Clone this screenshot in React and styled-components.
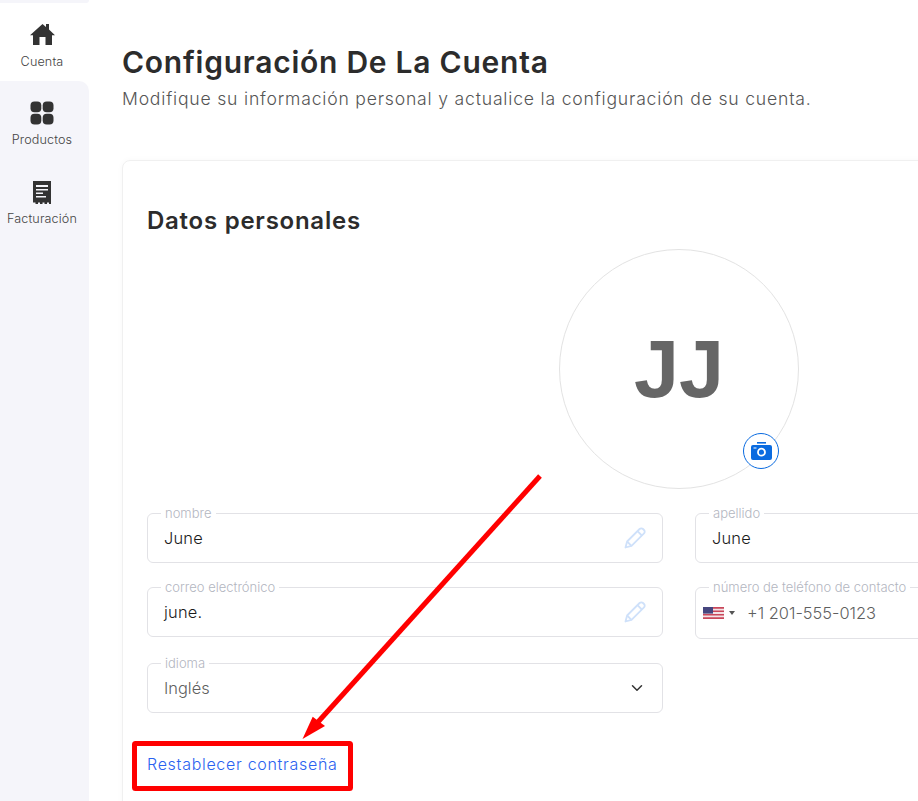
import styled, { createGlobalStyle } from 'styled-components'
import { ChevronDown } from 'lucide-react'

const GlobalStyle = createGlobalStyle`
  html, body {
    margin: 0;
    height: 801px;
    overflow: hidden;
    background: #fff;
    font-family: Inter, "Noto Sans", sans-serif;
    color: #2b2b2b;
  }
`

const Page = styled.div`
  position: relative;
  display: flex;
  width: 918px;
  height: 801px;
  overflow: hidden;
`

const Sidebar = styled.nav`
  flex: none;
  display: flex;
  flex-direction: column;
  width: 89px;
`

const TopCap = styled.div`
  height: 3px;
  background: #f5f5fa;
  border-radius: 0 0 10px 0;
`

const NavGroup = styled.div`
  flex: 1;
  background: #f5f5fa;
  border-radius: 0 10px 0 0;
`

const NavItem = styled.a`
  display: flex;
  flex-direction: column;
  align-items: center;
  width: 84px;
  height: ${(p) => (p.$active ? 78 : 79)}px;
  box-sizing: border-box;
  padding-top: ${(p) => (p.$active ? 18 : 19)}px;
  font-size: 12.6px;
  line-height: 16px;
  font-weight: 300;
  letter-spacing: 0.01em;
  color: #444;
`

const NavIcon = styled.span`
  display: flex;
  align-items: center;
  justify-content: center;
  height: 26px;
  margin-bottom: ${(p) => (p.$active ? 7 : 6)}px;
`

const Main = styled.main`
  flex: none;
  width: 1200px;
  padding: 42px 0 0 33px;
  box-sizing: border-box;
`

const Title = styled.h1`
  margin: 0;
  font-size: 30px;
  line-height: 40px;
  font-weight: 600;
  letter-spacing: 0.75px;
  color: #2c2c2c;
`

const Subtitle = styled.p`
  margin: 4px 0 0;
  font-size: 17.6px;
  line-height: 26px;
  font-weight: 300;
  letter-spacing: 0.8px;
  color: #555;
`

const Card = styled.section`
  margin-top: 48px;
  padding: 42px 24px 0;
  width: 1114px;
  height: 700px;
  box-sizing: border-box;
  border: 1px solid #f0f0f0;
  border-radius: 8px;
  box-shadow: 0 0 6px rgba(0, 0, 0, 0.03);
`

const CardTitle = styled.h2`
  margin: 0;
  font-size: 24px;
  line-height: 36px;
  font-weight: 600;
  letter-spacing: 0.75px;
  color: #2c2c2c;
`

const AvatarRow = styled.div`
  display: flex;
  justify-content: center;
  margin-top: 10px;
`

const Avatar = styled.div`
  position: relative;
  display: flex;
  align-items: center;
  justify-content: center;
  width: 240px;
  height: 240px;
  box-sizing: border-box;
  border: 1px solid #e3e3e3;
  border-radius: 50%;
  font-family: "Liberation Sans", Arial, sans-serif;
  font-size: 81px;
  font-weight: 700;
  color: #666;
`

const CameraBadge = styled.button`
  position: absolute;
  right: 19px;
  bottom: 19px;
  display: flex;
  align-items: center;
  justify-content: center;
  width: 36px;
  height: 36px;
  padding: 0;
  background: #fff;
  border: 1.5px solid #0a6be0;
  border-radius: 50%;
`

const FieldGrid = styled.div`
  display: grid;
  grid-template-columns: 516px 516px;
  column-gap: 32px;
  margin-top: 17px;
`

const Field = styled.fieldset`
  display: flex;
  align-items: center;
  justify-content: space-between;
  height: ${(p) => p.$height || 57}px;
  margin: 0 0 17px;
  padding: 0 16px 6px;
  box-sizing: border-box;
  border: 1px solid #e2e2e6;
  border-radius: 6px;
  min-width: 0;
`

const Legend = styled.legend`
  margin-left: -3px;
  padding: 0 4px;
  font-size: 13px;
  line-height: 14px;
  font-weight: 300;
  color: #b3b6bf;
`

const Value = styled.span`
  font-size: 16.4px;
  letter-spacing: ${(p) => (p.$muted ? 0 : 0.2)}px;
  color: ${(p) => (p.$muted ? '#5f5f5f' : '#1c1c1c')};
  font-weight: 300;
`

const FlagPicker = styled.span`
  display: inline-flex;
  align-items: center;
  gap: 5px;
  margin-right: 12px;
`

const Caret = styled.span`
  width: 0;
  height: 0;
  border-left: 3px solid transparent;
  border-right: 3px solid transparent;
  border-top: 4px solid #555;
`

const PhoneRow = styled.span`
  display: flex;
  align-items: center;
  margin-left: -9px;
`

const ResetLink = styled.a`
  display: inline-block;
  margin-top: 22px;
  font-size: 16px;
  line-height: 24px;
  font-weight: 300;
  letter-spacing: 0.7px;
  color: #2a62f0;
`

const Annotation = styled.svg`
  position: absolute;
  left: 0;
  top: 0;
  pointer-events: none;
`

const HomeIcon = () => (
  <svg width="25" height="21" viewBox="0 0 25 21" fill="#333">
    <path d="M12.5 0l3.5 3V0h3v5.6l6 5.6h-3V21h-6.5v-8h-6v8H3V11.2H0z" />
  </svg>
)

const GridIcon = () => (
  <svg width="24" height="24" viewBox="0 0 24 24" fill="#333">
    <rect x="0.5" y="0.5" width="10.8" height="10.8" rx="4" />
    <rect x="12.7" y="0.5" width="10.8" height="10.8" rx="4" />
    <rect x="0.5" y="12.7" width="10.8" height="10.8" rx="4" />
    <rect x="12.7" y="12.7" width="10.8" height="10.8" rx="4" />
  </svg>
)

const ReceiptIcon = () => (
  <svg width="18" height="23" viewBox="0 0 18 23">
    <path fill="#333" d="M0 0h18v23h-2v-1.500h-2V23h-2.500v-1.500h-2V23H7v-1.500H5V23H2.500v-1.500H0z" />
    <path fill="#f5f5fa" d="M3 4h12v2H3zM3 8h12v1.600H3zM3 11.500h7v1.600H3zM3 15h10v1.600H3z" />
  </svg>
)

const CameraIcon = () => (
  <svg width="21" height="18" viewBox="0 0 21 18">
    <path fill="#0a6be0" d="M6 0h9v1.600H6z" />
    <path fill="#0a6be0" fillRule="evenodd" d="M2 3h17a2 2 0 0 1 2 2v11a2 2 0 0 1-2 2H2a2 2 0 0 1-2-2V5a2 2 0 0 1 2-2zm8.500 2.800a4.400 4.400 0 1 0 0 8.800 4.400 4.400 0 0 0 0-8.800zm0 1.800a2.600 2.600 0 1 1 0 5.200 2.600 2.600 0 0 1 0-5.200z" />
    <path fill="#fff" d="M2.500 5.500h3v1h-3z" />
  </svg>
)

const Pencil = () => (
  <svg width="22" height="22" viewBox="0 0 22 22" fill="none" stroke="#cfe1fa" strokeWidth="1.8" strokeLinejoin="round">
    <path d="M1.500 20.500l1.600-6L15.600 2a2.400 2.400 0 0 1 3.400 0l1 1a2.400 2.400 0 0 1 0 3.400L7.500 18.900z" />
    <path d="M13.500 4.200l4.300 4.300M3.100 14.500l4.400 4.400" />
  </svg>
)

const UsFlag = () => (
  <svg width="21" height="12" viewBox="0 0 21 12">
    <rect width="21" height="12" fill="#f3e3e6" />
    <path fill="#c9485b" d="M0 0h21v1.700H0zM0 3.400h21v1.700H0zM0 6.900h21v1.700H0zM0 10.300h21V12H0z" />
    <rect width="10" height="6.600" fill="#46467f" />
  </svg>
)

const App = () => (
  <>
    <GlobalStyle />
    <Page>
      <Sidebar>
        <TopCap />
        <NavItem $active>
          <NavIcon $active><HomeIcon /></NavIcon>
          Cuenta
        </NavItem>
        <NavGroup>
          <NavItem>
            <NavIcon><GridIcon /></NavIcon>
            Productos
          </NavItem>
          <NavItem>
            <NavIcon><ReceiptIcon /></NavIcon>
            Facturación
          </NavItem>
        </NavGroup>
      </Sidebar>

      <Main>
        <Title>Configuración De La Cuenta</Title>
        <Subtitle>Modifique su información personal y actualice la configuración de su cuenta.</Subtitle>

        <Card>
          <CardTitle>Datos personales</CardTitle>
          <AvatarRow>
            <Avatar>
              JJ
              <CameraBadge><CameraIcon /></CameraBadge>
            </Avatar>
          </AvatarRow>

          <FieldGrid>
            <Field>
              <Legend>nombre</Legend>
              <Value>June</Value>
              <Pencil />
            </Field>
            <Field>
              <Legend>apellido</Legend>
              <Value>June</Value>
            </Field>
            <Field>
              <Legend>correo electrónico</Legend>
              <Value>june.</Value>
              <Pencil />
            </Field>
            <Field $height={59}>
              <Legend>número de teléfono de contacto</Legend>
              <PhoneRow>
                <FlagPicker><UsFlag /><Caret /></FlagPicker>
                <Value $muted>+1 201-555-0123</Value>
              </PhoneRow>
            </Field>
            <Field>
              <Legend>idioma</Legend>
              <Value $muted>Inglés</Value>
              <ChevronDown size={18} color="#333" />
            </Field>
          </FieldGrid>

          <ResetLink>Restablecer contraseña</ResetLink>
        </Card>
      </Main>

      <Annotation width="918" height="801" viewBox="0 0 918 801">
        <path d="M540 476L318 722" stroke="#f00" strokeWidth="5" fill="none" />
        <path fill="#f00" d="M302.500 739l10.200-22.300 12.300 9.300z" />
        <rect x="134.500" y="743.500" width="216" height="45" rx="1" fill="none" stroke="#f00" strokeWidth="5" />
      </Annotation>
    </Page>
  </>
)

export default App
